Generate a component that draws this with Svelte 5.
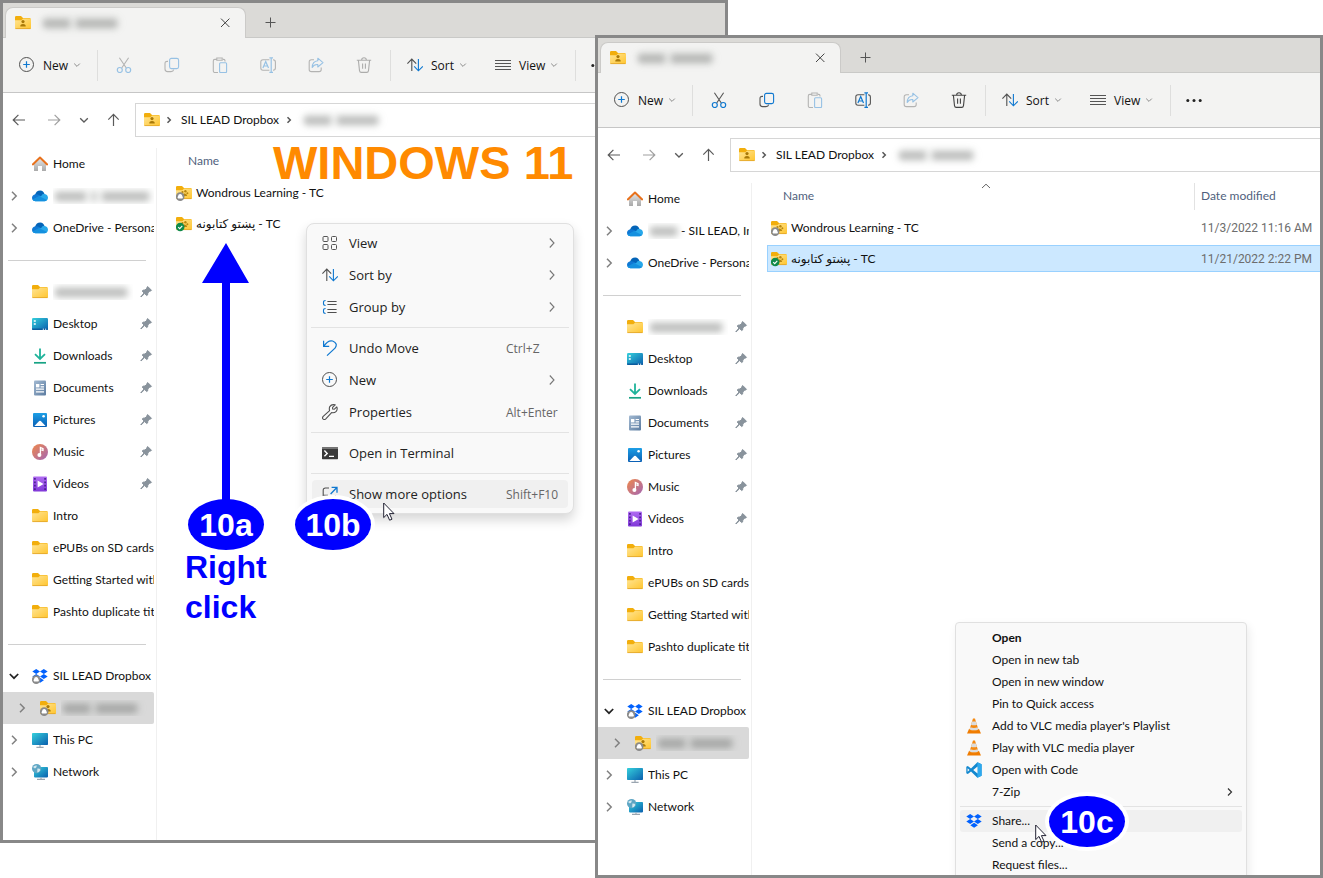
<script>
  const pinned = [
    { icon: 'folder', label: '', hidden: [72], pin: true },
    { icon: 'desktop', label: 'Desktop', pin: true },
    { icon: 'downloads', label: 'Downloads', pin: true },
    { icon: 'documents', label: 'Documents', pin: true },
    { icon: 'pictures', label: 'Pictures', pin: true },
    { icon: 'music', label: 'Music', pin: true },
    { icon: 'videos', label: 'Videos', pin: true },
    { icon: 'folder', label: 'Intro' },
    { icon: 'folder', label: 'ePUBs on SD cards' },
    { icon: 'folder', label: 'Getting Started with' },
    { icon: 'folder', label: 'Pashto duplicate title' },
  ];

  const drives = [
    { icon: 'dropboxsync', label: 'SIL LEAD Dropbox', twist: 'down' },
    { icon: 'usersync', label: '', hidden: [27, 41], twist: 'right', nested: true },
    { icon: 'pc', label: 'This PC', twist: 'right' },
    { icon: 'network', label: 'Network', twist: 'right' },
  ];

  const accounts = (hidden, label) => [
    { icon: 'home', label: 'Home' },
    { icon: 'cloud', label, hidden, twist: 'right' },
    { icon: 'cloud', label: 'OneDrive - Personal', twist: 'right' },
  ];

  const explorers = [
    {
      id: 'back',
      groups: [accounts([31, 4, 47], ''), pinned, drives],
      tools: { cut: false, copy: false, paste: false, rename: false, share: false, trash: false },
      files: [
        { name: 'Wondrous Learning - TC', icon: 'sharedsync' },
        { name: 'پښتو کتابونه - TC', icon: 'sharedok' },
      ],
      dates: false,
    },
    {
      id: 'front',
      groups: [accounts([27], '- SIL LEAD, Inc'), pinned, drives],
      tools: { cut: true, copy: true, paste: false, rename: true, share: false, trash: true },
      files: [
        { name: 'Wondrous Learning - TC', icon: 'sharedsync', date: '11/3/2022 11:16 AM' },
        { name: 'پښتو کتابونه - TC', icon: 'sharedok', date: '11/21/2022 2:22 PM', selected: true },
      ],
      dates: true,
    },
  ];

  const modernMenu = [
    [
      { icon: 'grid', label: 'View', sub: true },
      { icon: 'sort', label: 'Sort by', sub: true },
      { icon: 'group', label: 'Group by', sub: true },
    ],
    [
      { icon: 'undo', label: 'Undo Move', key: 'Ctrl+Z' },
      { icon: 'new', label: 'New', sub: true },
      { icon: 'wrench', label: 'Properties', key: 'Alt+Enter' },
    ],
    [{ icon: 'terminal', label: 'Open in Terminal' }],
    [{ icon: 'more', label: 'Show more options', key: 'Shift+F10', active: true }],
  ];

  const classicMenu = [
    [
      { label: 'Open', bold: true },
      { label: 'Open in new tab' },
      { label: 'Open in new window' },
      { label: 'Pin to Quick access' },
      { icon: 'vlc', label: "Add to VLC media player's Playlist" },
      { icon: 'vlc', label: 'Play with VLC media player' },
      { icon: 'code', label: 'Open with Code' },
      { label: '7-Zip', sub: true },
    ],
    [
      { icon: 'dropbox', label: 'Share...', active: true },
      { label: 'Send a copy...' },
      { label: 'Request files...' },
    ],
  ];
</script>

{#snippet folderShape()}
  <path d="M0 2.2Q0 1 1.2 1H6L8 3H14.6Q15.6 3 15.6 4V6H0Z" fill="#f2ae0c" />
  <path d="M0 5.2H6.4L8.2 3.4H15Q16 3.4 16 4.4V13Q16 14 14.8 14H1.2Q0 14 0 13Z" fill="url(#g-folder)" />
  <path d="M.4 13.6H15.6" stroke="#dfa32a" stroke-width=".8" />
{/snippet}

{#snippet dropboxShape()}
  <path d="M4.2 1 8 3.5 4.2 6 .3 3.5ZM11.8 1 15.7 3.5 11.8 6 8 3.5ZM.3 8.6 4.2 6.1 8 8.6 4.2 11.1ZM11.8 6.1 15.7 8.6 11.8 11.1 8 8.6ZM4.3 12.2 8.1 9.7 11.9 12.2 8.1 14.7Z" fill="#0061fe" />
{/snippet}

{#snippet syncBadge()}
  <circle cx="4.2" cy="11.6" r="4.3" fill="#8a8a8a" />
  <path d="M2.2 13.6Q.9 12.5 2 11.3 2.3 9 4.4 9.1 6.2 9.3 6.4 11.2 7.5 12.4 6.4 13.6Z" fill="#fff" />
{/snippet}

{#snippet person()}
  <circle cx="8" cy="6.6" r="1.6" fill="#a97908" />
  <path d="M5.3 11.6Q5 9 8 9T10.7 11.6Z" fill="#a97908" />
{/snippet}

{#snippet icon(name)}
  <svg class="icon" viewBox="0 0 16 16" width="16" height="16" fill="none" aria-hidden="true">
    {#if name === 'folder'}
      {@render folderShape()}
    {:else if name === 'user'}
      {@render folderShape()}
      {@render person()}
    {:else if name === 'usersync'}
      {@render folderShape()}
      {@render person()}
      {@render syncBadge()}
    {:else if name === 'sharedsync' || name === 'sharedok'}
      {@render folderShape()}
      <g fill="#b8860f">
        <circle cx="6.5" cy="7" r="1.1" /><circle cx="9.4" cy="6.2" r="1.2" /><circle cx="11.4" cy="8.2" r="1" />
        <path d="M5.6 11Q6.6 8.2 8.8 8.5T11.2 11Z" />
      </g>
      {#if name === 'sharedsync'}
        {@render syncBadge()}
      {:else}
        <circle cx="4.2" cy="11" r="4.3" fill="#0f8a4b" />
        <path d="M2.2 11.1 3.7 12.6 6.3 9.8" stroke="#fff" stroke-width="1.1" />
      {/if}
    {:else if name === 'dropbox'}
      {@render dropboxShape()}
    {:else if name === 'dropboxsync'}
      {@render dropboxShape()}
      {@render syncBadge()}
    {:else if name === 'home'}
      <path d="M2 7.5 8 2.2 14 7.5V14.4Q14 15 13.4 15H10V10H6V15H2.6Q2 15 2 14.4Z" fill="url(#g-home)" />
      <path d="M.8 8.4 8 1.6 15.2 8.4" stroke="#e8711c" stroke-width="2" stroke-linecap="round" stroke-linejoin="round" />
    {:else if name === 'cloud'}
      <path d="M3 7Q4.3 2.6 8.2 2.6 11.5 2.6 12.6 6.4L6 10.5 1 10Z" fill="#0364b8" />
      <path d="M3.4 6.3Q.2 6.8 0 9.8 .1 12.4 3 13.1L11 9.4 7.2 7Q5.3 5.9 3.4 6.3Z" fill="#0f78d4" />
      <path d="M9 8.2Q10.6 5.4 12.7 5.9 15.9 6.5 16 9.8 15.7 13 12.6 13.2H3.4Q1.4 13.1.5 11.8L8 8.2Z" fill="#28a8ea" />
      <path d="M7 8 15 12Q14 13.2 12.6 13.2H3.4Q1.4 13.1.5 11.8Z" fill="#1490df" />
    {:else if name === 'desktop'}
      <rect y="2" width="16" height="12" rx="1.2" fill="url(#g-desk)" />
      <path d="M1.8 4.2h2v1.6h-2zM1.8 7.2h2v1.6h-2z" fill="#fff" />
      <path d="M0 12.6H16V13Q16 14 15 14H1Q0 14 0 13Z" fill="#0b5c9e" />
      <path d="M10.8 13.2h1.2M13 13.2h1.2" stroke="#fff" />
    {:else if name === 'downloads'}
      <path d="M8 .4V10.8M3 6.2 8 11 13 6.2" stroke="#1fb39a" stroke-width="1.8" />
      <path d="M2 14.8H14" stroke="#17a384" stroke-width="1.7" />
    {:else if name === 'documents'}
      <rect x="2" y=".4" width="12" height="15.2" rx="1" fill="url(#g-doc)" />
      <path d="M4 4h3.4v3.4H4z" fill="#fff" />
      <path d="M8.6 4.5H12M8.6 6.8H12M4 9.2H12M4 11.8H12" stroke="#fff" stroke-width="1.2" />
    {:else if name === 'pictures'}
      <rect x="1" y="1" width="14" height="14" rx="1" fill="url(#g-pic)" />
      <path d="M2.4 14 7.2 9Q8 8.3 8.8 9L13.6 14Z" fill="#fff" />
      <circle cx="11.6" cy="4.2" r="1.3" fill="#fff" />
    {:else if name === 'music'}
      <circle cx="8" cy="8" r="8" fill="url(#g-music)" />
      <path d="M8.4 11V3.4L11 4.6V6.4L9.3 5.8" stroke="#fff" stroke-width="1.3" />
      <circle cx="7.4" cy="11" r="2" fill="#fff" />
    {:else if name === 'videos'}
      <rect x="1" y=".5" width="14" height="15" rx="1" fill="url(#g-video)" />
      <path d="M2.9 2V14M13.1 2V14" stroke="#4b2090" stroke-width="1.7" stroke-dasharray="1.8 1.6" />
      <path d="M5.6 4.4 11.6 8 5.6 11.6Z" fill="#fff" />
    {:else if name === 'pc'}
      <rect y="1" width="16" height="12" rx=".8" fill="url(#g-desk)" />
      <path d="M8 13V15M4.4 15.3H11.6" stroke="#9aa5b0" stroke-width="1.2" />
    {:else if name === 'network'}
      <rect x="2" y="3" width="14" height="10.4" rx=".8" fill="url(#g-desk)" />
      <path d="M9 13.4V15.3M5 15.4H13" stroke="#9aa5b0" stroke-width="1.1" />
      <circle cx="4.6" cy="4.6" r="4.6" fill="#5fa6c4" />
      <path d="M1 3Q3 1 4.8 1.6 5 3.6 3 4.6ZM5.4 4.6Q8 4.4 8.4 6 7 8.6 5.2 8.6Z" fill="#d3e8ef" />
    {:else if name === 'pin'}
      <path d="M9.8 2.6 13.4 6.2 12.8 7 11.6 7.2 9.8 9 9.6 11 8.8 11.6 6.6 9.6 3 13 2.8 12.8 6 9 4.2 7 5 6.2 7 6 8.8 4.2 9 3.2Z" fill="#89939c" stroke="#89939c" stroke-linejoin="round" />
    {:else if name === 'right'}
      <path d="M6 3.8 10.2 8 6 12.2" stroke="#808080" stroke-width="1.5" />
    {:else if name === 'down'}
      <path d="M3.8 6 8 10.2 12.2 6" stroke="#222" stroke-width="1.7" />
    {:else if name === 'crumb'}
      <path d="M6.5 5.2 9.3 8 6.5 10.8" stroke="#555" stroke-width="1.5" />
    {:else if name === 'sub'}
      <path d="M5.8 3.5 10 8 5.8 12.5" stroke="#777" stroke-width="1.1" />
    {:else if name === 'subsmall'}
      <path d="M6 4.5 9.5 8 6 11.5" stroke="#333" stroke-width="1.2" />
    {:else if name === 'back'}
      <path d="M2.4 8H14M7.4 2.8 2.2 8 7.4 13.2" stroke="#5a5a5a" stroke-width="1.2" />
    {:else if name === 'forward'}
      <path d="M2 8H13.6M8.6 2.8 13.8 8 8.6 13.2" stroke="#a0a0a0" stroke-width="1.2" />
    {:else if name === 'recent'}
      <path d="M4.2 6.2 8 10 11.8 6.2" stroke="#5a5a5a" stroke-width="1.3" />
    {:else if name === 'up'}
      <path d="M8.5 14V2.6M3.3 7.6 8.5 2.4 13.7 7.6" stroke="#5a5a5a" stroke-width="1.2" />
    {:else if name === 'close'}
      <path d="M4 3.6 12.4 12M12.4 3.6 4 12" stroke="#444" stroke-width="1" />
    {:else if name === 'plus'}
      <path d="M8.5 3.5V13.5M3.5 8.5H13.5" stroke="#555" />
    {:else if name === 'new'}
      <circle cx="7.5" cy="7.5" r="7" stroke="#505050" />
      <path d="M7.5 4.2V10.8M4.2 7.5H10.8" stroke="#0f78d0" stroke-width="1.2" />
    {:else if name === 'cut'}
      <path d="M3.4.8 10.3 11M12.6.8 5.7 11" stroke="#555" stroke-width="1.1" />
      <circle cx="3.8" cy="13" r="2.5" stroke="#0f78d0" stroke-width="1.2" />
      <circle cx="12.2" cy="13" r="2.5" stroke="#0f78d0" stroke-width="1.2" />
    {:else if name === 'copy'}
      <path d="M4 4.4H3.2Q1 4.4 1 6.4V12Q1 14.6 3.6 14.6H7Q9.3 14.6 9.6 12.6" stroke="#555" stroke-width="1.1" />
      <rect x="5.6" y="1.4" width="9" height="10.2" rx="1.8" stroke="#0f78d0" stroke-width="1.1" />
    {:else if name === 'paste'}
      <path d="M4.6 2.4H2.8Q1.3 2.4 1.3 3.9V14Q1.3 15.5 2.8 15.5H6M11 2.4H11.7Q13 2.4 13 3.8V4.6M4.8 1H10.2V3.2H4.8Z" stroke="#555" stroke-width="1.1" />
      <rect x="7.6" y="5.8" width="7" height="9.8" rx="1" stroke="#0f78d0" stroke-width="1.1" />
    {:else if name === 'rename'}
      <path d="M9.4 2.8H3Q.8 2.8.8 5V11Q.8 13.2 3 13.2H9.4M13 2.8Q15.4 2.8 15.4 5V11Q15.4 13.2 13 13.2" stroke="#555" stroke-width="1.1" />
      <path d="M2.9 11 5.7 4.6 8.5 11M4 9H7.4M11.2 1V15.2M9.4.8H13M9.4 15.4H13" stroke="#0f78d0" stroke-width="1.2" />
    {:else if name === 'share'}
      <path d="M6 2.8H3.4Q1.2 2.8 1.2 5V12.4Q1.2 14.6 3.4 14.6H11Q13.2 14.6 13.2 12.4V10.6" stroke="#555" stroke-width="1.1" />
      <path d="M9.8 1.2 15 5.6 9.8 10V7.5Q6 7.2 4.2 10.4 4.4 4.4 9.8 3.8Z" stroke="#0f78d0" stroke-width="1.1" stroke-linejoin="round" />
    {:else if name === 'trash'}
      <path d="M.8 3.2H15.2M5.6 3Q5.8.8 8 .8T10.4 3M2.4 3.4 3.5 13.6Q3.8 15.4 5.2 15.4H10.8Q12.2 15.4 12.5 13.6L13.6 3.4M6.6 6.6V11.8M9.4 6.6V11.8" stroke="#444" stroke-width="1.1" />
    {:else if name === 'sort'}
      <path d="M4.8 14V2.2M.4 6.6 4.8 2 9.2 6.6" stroke="#505050" stroke-width="1.1" />
      <path d="M11.4 2V13.8M7.2 9.4 11.4 13.8 15.8 9.4" stroke="#0f78d0" stroke-width="1.1" />
    {:else if name === 'lines'}
      <path d="M0 3.5H16M0 6.5H16M0 9.5H16M0 12.5H16" stroke="#555" />
    {:else if name === 'dots'}
      <g fill="#222"><circle cx="1.8" cy="8.5" r="1.5" /><circle cx="8" cy="8.5" r="1.5" /><circle cx="14.2" cy="8.5" r="1.5" /></g>
    {:else if name === 'grid'}
      <path d="M2 1.5H5Q6 1.5 6 2.5V5.5Q6 6.5 5 6.5H2Q1 6.5 1 5.5V2.5Q1 1.5 2 1.5ZM10.5 1.5H13.5Q14.5 1.5 14.5 2.5V5.5Q14.5 6.5 13.5 6.5H10.5Q9.5 6.5 9.5 5.5V2.5Q9.5 1.5 10.5 1.5ZM2 9.5H5Q6 9.5 6 10.5V13.5Q6 14.5 5 14.5H2Q1 14.5 1 13.5V10.5Q1 9.5 2 9.5ZM10.5 9.5H13.5Q14.5 9.5 14.5 10.5V13.5Q14.5 14.5 13.5 14.5H10.5Q9.5 14.5 9.5 13.5V10.5Q9.5 9.5 10.5 9.5Z" stroke="#555" />
    {:else if name === 'group'}
      <path d="M5.4 2.5H14.6M5.4 5.5H14.6M5.4 10.5H14.6M5.4 13.5H14.6" stroke="#505050" />
      <path d="M3.6 1.5Q1.5 1.5 1.5 3.2V4.8Q1.5 6.5 3.6 6.5M3.6 9.5Q1.5 9.5 1.5 11.2V12.8Q1.5 14.5 3.6 14.5" stroke="#0f78d0" stroke-width="1.1" />
    {:else if name === 'undo'}
      <path d="M1.6.8V6.4H7.2M1.8 6.2Q6-.2 10.6 1 16.4 3.4 13 8.2L5 15.6" stroke="#0f78d0" stroke-width="1.2" />
    {:else if name === 'wrench'}
      <path d="M13.2.9Q9.6-.2 7.8 2.6 6.9 4.4 7.6 6.6L1.2 12.4Q-.1 14 1.2 15.1 2.5 16.1 3.8 14.8L9.6 8.6Q12.4 9.2 14.2 7.3 15.8 5.2 14.8 2.9L12.4 5.2 10.6 5 10.6 3.4Z" stroke="#505050" stroke-width="1.1" stroke-linejoin="round" />
    {:else if name === 'terminal'}
      <rect y="2.2" width="16" height="12" rx=".6" fill="#3a3a3a" />
      <path d="M0 2.2H16V4H0Z" fill="#777" />
      <path d="M2.4 5.6 5.2 8.4 2.4 11.2M7 11.4H12" stroke="#fff" stroke-width="1.4" />
    {:else if name === 'more'}
      <path d="M7 2H3.4Q1.2 2 1.2 4.2V12.4Q1.2 14.6 3.4 14.6H11.2Q13.4 14.6 13.4 12.4V9M1.2 9.4H6" stroke="#505050" stroke-width="1.1" />
      <path d="M8.6 8 14.6 1.8M9.6 1.4H15V6.8" stroke="#0f78d0" stroke-width="1.3" />
    {:else if name === 'vlc'}
      <path d="M3 11H13L15 15.6H1Z" fill="#f07c00" />
      <path d="M7 .4H9L12.6 12Q8 14.4 3.4 12Z" fill="#f58a12" />
      <path d="M6 3.6H10L11 6.8Q8 7.8 5 6.8ZM4.3 9.2Q8 10.6 11.7 9.2L12.4 11.4Q8 13.2 3.6 11.4Z" fill="#dcdcdc" />
    {:else if name === 'code'}
      <path d="M11.4.3 15.6 2.2V13.8L11.4 15.7 5 9.4 1.8 12 .3 11.2V4.8L1.8 4 5 6.6Z" fill="#1388cf" />
      <path d="M11.4.3 15.6 2.2V13.8L11.4 15.7Z" fill="#2da9ee" />
      <path d="M11.5 4.6V11.4L7.2 8ZM1.6 6.2V9.8L3.5 8Z" fill="#f9f9f9" />
    {/if}
  </svg>
{/snippet}

{#snippet caret()}
  <svg class="caret" viewBox="0 0 8 8" width="8" height="8" fill="none" aria-hidden="true">
    <path d="M1.2 2.6 4 5.4 6.8 2.6" stroke="#8a8a8a" />
  </svg>
{/snippet}

{#snippet masked(parts)}
  <span class="masked" aria-hidden="true">
    {#each parts as w}<i style="width: {w}px"></i>{/each}
  </span>
{/snippet}

{#snippet cursor(place)}
  <svg class="cursor {place}" viewBox="0 0 12 19" width="12" height="19" aria-hidden="true">
    <path d="M.7 1V15.6L4 12.4 6.6 18.2 9 17.2 6.4 11.6H11Z" fill="#fff" stroke="#223" stroke-width="1" />
  </svg>
{/snippet}

{#snippet explorer(win)}
  <section class="window {win.id}" aria-label="File Explorer">
    <header class="titlebar">
      <div class="tab">
        {@render icon('user')}
        {@render masked([27, 41])}
        <button class="plain" aria-label="Close tab">{@render icon('close')}</button>
      </div>
      <button class="plain add" aria-label="New tab">{@render icon('plus')}</button>
    </header>

    <div class="toolbar">
      <button class="tool first">{@render icon('new')}<span>New</span>{@render caret()}</button>
      <span class="rule"></span>
      <div class="actions">
        {#each Object.entries(win.tools) as [name, on]}
          <button aria-label={name} disabled={!on}>{@render icon(name)}</button>
        {/each}
      </div>
      <span class="rule"></span>
      <button class="tool sort">{@render icon('sort')}<span>Sort</span>{@render caret()}</button>
      <button class="tool view">{@render icon('lines')}<span>View</span>{@render caret()}</button>
      <span class="rule"></span>
      <button class="plain dots" aria-label="See more">{@render icon('dots')}</button>
    </div>

    <div class="navbar">
      {#each ['back', 'forward', 'recent', 'up'] as name}
        <button class="plain" aria-label={name}>{@render icon(name)}</button>
      {/each}
      <nav class="address" aria-label="Address">
        {@render icon('user')}
        {@render icon('crumb')}
        <a href="#dropbox">SIL LEAD Dropbox</a>
        {@render icon('crumb')}
        {@render masked([27, 41])}
      </nav>
    </div>

    <div class="body">
      <aside>
        {#each win.groups as group, g}
          {#if g > 0}<hr />{/if}
          {#each group as item}
            <a class="row" class:nested={item.nested} href="#folder">
              <span class="twist">{#if item.twist}{@render icon(item.twist)}{/if}</span>
              {@render icon(item.icon)}
              <span class="label">
                {#if item.hidden}{@render masked(item.hidden)}{/if}{item.label}
              </span>
              {#if item.pin}{@render icon('pin')}{/if}
            </a>
          {/each}
        {/each}
      </aside>

      <main>
        <table>
          <thead>
            <tr>
              <th class="name">
                Name
                {#if win.dates}
                  <svg class="sorted" viewBox="0 0 10 6" width="10" height="6" fill="none" aria-hidden="true">
                    <path d="M1 5 5 1.2 9 5" stroke="#666" />
                  </svg>
                {/if}
              </th>
              {#if win.dates}<th class="date">Date modified</th>{/if}
            </tr>
          </thead>
          <tbody>
            {#each win.files as file}
              <tr class:selected={file.selected}>
                <td class="name"><div>{@render icon(file.icon)}<span>{file.name}</span></div></td>
                {#if win.dates}<td class="date">{file.date}</td>{/if}
              </tr>
            {/each}
          </tbody>
        </table>
      </main>
    </div>

    {#if win.id === 'front'}
      <div class="menu classic" role="menu">
        {#each classicMenu as group, g}
          {#if g > 0}<hr />{/if}
          {#each group as item}
            <button role="menuitem" class:active={item.active} class:bold={item.bold}>
              <span class="slot">{#if item.icon}{@render icon(item.icon)}{/if}</span>
              <span class="text">{item.label}</span>
              {#if item.sub}{@render icon('subsmall')}{/if}
            </button>
          {/each}
        {/each}
      </div>
    {/if}
  </section>
{/snippet}

<svg class="defs" width="0" height="0" aria-hidden="true">
  <defs>
    <linearGradient id="g-folder" x2="1" y2="1"><stop stop-color="#ffe596" /><stop offset="1" stop-color="#ffc52e" /></linearGradient>
    <linearGradient id="g-home" x2="0" y2="1"><stop stop-color="#e4e4e4" /><stop offset="1" stop-color="#a9a9a9" /></linearGradient>
    <linearGradient id="g-desk" x2="1" y2="1"><stop stop-color="#35d0dc" /><stop offset="1" stop-color="#0a5fae" /></linearGradient>
    <linearGradient id="g-doc" x2="1" y2="1"><stop stop-color="#a3bad2" /><stop offset="1" stop-color="#5b7ba0" /></linearGradient>
    <linearGradient id="g-pic" x2="0" y2="1"><stop stop-color="#1d9fe6" /><stop offset="1" stop-color="#0a5fb4" /></linearGradient>
    <linearGradient id="g-music" x2="1" y2="1"><stop stop-color="#f0884a" /><stop offset="1" stop-color="#a367b5" /></linearGradient>
    <linearGradient id="g-video" x2="0" y2="1"><stop stop-color="#b06cf2" /><stop offset="1" stop-color="#8038d8" /></linearGradient>
  </defs>
</svg>

<div class="stage">
  {#each explorers as win (win.id)}
    {@render explorer(win)}
  {/each}

  <div class="menu modern" role="menu">
    {#each modernMenu as group, g}
      {#if g > 0}<hr />{/if}
      {#each group as item}
        <button role="menuitem" class:active={item.active}>
          {@render icon(item.icon)}
          <span class="text">{item.label}</span>
          {#if item.key}<kbd>{item.key}</kbd>{/if}
          {#if item.sub}{@render icon('sub')}{/if}
        </button>
      {/each}
    {/each}
  </div>

  <h1>WINDOWS 11</h1>
  <svg class="arrow" viewBox="0 0 48 262" width="48" height="262" aria-hidden="true">
    <path d="M24 0 47 40H28V262H20V40H0Z" fill="#00f" />
  </svg>
  <span class="step a">10a</span>
  <span class="step b">10b</span>
  <span class="step c">10c</span>
  <p class="note">Right click</p>
  {@render cursor('on-modern')}
  {@render cursor('on-classic')}
</div>

<style>
  :global(body) {
    margin: 0;
    background: #fff;
  }
  .stage {
    position: relative;
    min-height: 100vh;
    overflow: hidden;
    font-family: Lato, 'DejaVu Sans', sans-serif;
    font-size: 12px;
    line-height: 16px;
    color: #111;
  }
  .stage * {
    box-sizing: border-box;
  }
  .toolbar,
  .modern {
    font-family: 'Open Sans', 'Noto Sans', sans-serif;
  }
  .defs {
    position: absolute;
  }
  button {
    display: flex;
    align-items: center;
    margin: 0;
    padding: 0;
    border: 0;
    background: none;
    color: inherit;
    font: inherit;
    text-align: left;
  }
  a {
    color: inherit;
    text-decoration: none;
  }
  svg {
    flex: none;
    display: block;
  }
  .plain {
    justify-content: center;
  }

  .window {
    position: absolute;
    display: flex;
    flex-direction: column;
    border: 3px solid #888;
    background: #fff;
    overflow: hidden;
  }
  .back {
    inset: 0 595px 35px 0;
  }
  .front {
    inset: 35px 0 0 595px;
  }

  .titlebar {
    display: flex;
    height: 35px;
    padding: 4px 0 0 2px;
    background: #dbdad7;
    border-bottom: 1px solid #c9c9c7;
  }
  .tab {
    display: flex;
    align-items: center;
    width: 241px;
    height: 31px;
    padding: 0 12px 0 9px;
    gap: 10px;
    border: 1px solid #cbcac8;
    border-bottom: 0;
    border-radius: 8px 8px 0 0;
    background: #f3f3f2;
  }
  .tab .plain {
    margin-left: auto;
  }
  .add {
    width: 48px;
  }

  .toolbar {
    display: flex;
    align-items: center;
    height: 55px;
    background: #f3f3f2;
    border-bottom: 1px solid #c6c6c6;
    white-space: nowrap;
  }
  .tool {
    flex: none;
    gap: 8px;
  }
  .tool span,
  kbd {
    padding-top: 2px;
  }
  .tool .caret {
    margin-left: -3px;
  }
  .first {
    width: 94px;
    padding-left: 16px;
  }
  .sort {
    width: 104px;
    padding-left: 16px;
  }
  .view {
    width: 80px;
  }
  .rule {
    flex: none;
    width: 1px;
    height: 31px;
    background: #dededd;
  }
  .actions {
    display: flex;
    margin: 0 2px;
  }
  .actions button {
    width: 48px;
    justify-content: center;
  }
  .actions button:disabled {
    opacity: 0.4;
  }
  .dots {
    width: 46px;
  }

  .navbar {
    display: grid;
    grid-template-columns: 32px 38px 22px 36px 1fr;
    height: 55px;
    padding-top: 10px;
    flex: none;
  }
  .navbar .plain {
    height: 34px;
  }
  .address {
    display: flex;
    align-items: center;
    height: 34px;
    margin-left: 4px;
    padding-left: 8px;
    border: 1px solid #d6d6d6;
    border-right: 0;
    white-space: nowrap;
  }
  .address .icon + .icon {
    margin-left: 1px;
  }
  .address a {
    margin: 0 2px 0 4px;
  }
  .address .masked {
    margin-left: 5px;
  }

  .masked {
    display: inline-flex;
    align-items: center;
    gap: 6px;
    height: 16px;
    padding: 0 4px 0 2px;
    border-radius: 8px;
    background: rgba(120, 130, 120, 0.08);
    filter: blur(3px);
    vertical-align: top;
  }
  .masked i {
    height: 9px;
    border-radius: 3px;
    background: rgba(90, 90, 90, 0.34);
  }

  .body {
    display: flex;
    flex: 1;
    min-height: 0;
  }
  aside {
    flex: none;
    width: 154px;
    padding-right: 2px;
    border-right: 1px solid #f0f0f0;
  }
  .row {
    display: flex;
    align-items: center;
    height: 32px;
    gap: 5px;
  }
  .twist {
    display: flex;
    flex: none;
    width: 24px;
    height: 16px;
    padding-left: 3px;
  }
  .row.nested {
    padding-left: 8px;
    border-radius: 0 2px 2px 0;
    background: #d9d9d9;
  }
  .label {
    flex: 1;
    min-width: 0;
    overflow: hidden;
    white-space: nowrap;
  }
  aside hr {
    height: 1px;
    margin: 16px 8px 15px 5px;
    border: 0;
    background: #d0d0d0;
  }

  main {
    flex: 1;
    min-width: 0;
    padding-left: 15px;
    margin-top: -4px;
  }
  table {
    width: 100%;
    border-spacing: 0 4px;
    table-layout: fixed;
  }
  th,
  td {
    height: 27px;
    padding: 0;
    white-space: nowrap;
    font-weight: 400;
    text-align: left;
  }
  th {
    position: relative;
    padding-bottom: 2px;
    color: #4f5f7d;
  }
  th.name {
    padding-left: 16px;
  }
  td.name div {
    display: flex;
    align-items: center;
    gap: 4px;
    padding-left: 4px;
  }
  .date {
    width: 126px;
    padding-left: 7px;
  }
  th.date {
    border-left: 1px solid #e2e2e2;
    padding-left: 6px;
  }
  td.date {
    font-family: Roboto, sans-serif;
    color: #6d6d6d;
  }
  .selected td {
    background: #cce8ff;
    border: 1px solid #99d1ff;
    border-width: 1px 0;
  }
  .selected td.name {
    border-left-width: 1px;
  }
  .selected td.name div {
    padding-left: 3px;
  }
  .sorted {
    position: absolute;
    left: 50%;
    top: 0;
  }

  .menu {
    position: absolute;
    display: flex;
    flex-direction: column;
    border: 1px solid #e0e0e0;
    background: #f9f9f9;
  }
  .menu hr {
    width: 100%;
    height: 1px;
    border: 0;
    background: #e3e3e3;
  }
  .menu .text {
    flex: 1;
    white-space: nowrap;
  }
  .modern {
    left: 306px;
    top: 223px;
    width: 268px;
    padding: 3px 4px;
    border-radius: 8px;
    box-shadow: 0 6px 12px rgba(0, 0, 0, 0.16);
  }
  .modern hr {
    margin: 4px 0;
  }
  .modern button {
    height: 32px;
    padding: 0 9px 0 11px;
    gap: 11px;
    color: #222;
  }
  .modern .text {
    font-size: 13px;
  }
  .modern kbd {
    width: 54px;
    font: inherit;
    color: #666;
    white-space: nowrap;
  }
  .modern .active {
    height: 28px;
    margin: 2px 1px;
    padding: 0 8px 0 10px;
    border-radius: 4px;
    background: #f0f0f0;
  }
  .classic {
    left: 357px;
    top: 584px;
    width: 292px;
    padding: 4px 4px 12px;
    border-radius: 4px;
    box-shadow: 2px 4px 10px rgba(0, 0, 0, 0.08);
  }
  .classic hr {
    margin: 3px 0;
  }
  .classic button {
    height: 22px;
    padding: 0 4px 0 6px;
    border-radius: 3px;
  }
  .classic .slot {
    width: 26px;
  }
  .classic .active {
    background: #f0f0f0;
  }
  .classic .bold {
    font-weight: 700;
  }

  h1,
  .note,
  .step {
    position: absolute;
    margin: 0;
    font-family: 'Liberation Sans', Arial, sans-serif;
    font-weight: 700;
  }
  h1 {
    left: 273px;
    top: 142px;
    font-size: 47px;
    line-height: 42px;
    color: #ff8a00;
    white-space: nowrap;
  }
  .note {
    left: 185px;
    top: 547px;
    width: 100px;
    font-size: 32px;
    line-height: 40px;
    color: #00f;
  }
  .step {
    display: grid;
    place-items: center;
    width: 76px;
    height: 51px;
    border-radius: 50%;
    background: #00f;
    box-shadow: 0 0 0 4px #fff;
    font-size: 32px;
    line-height: 36px;
    color: #fff;
  }
  .a {
    left: 188px;
    top: 499px;
    box-shadow: none;
  }
  .b {
    left: 295px;
    top: 499px;
  }
  .c {
    left: 1049px;
    top: 796px;
  }
  .arrow {
    position: absolute;
    left: 202px;
    top: 243px;
  }
  .cursor {
    position: absolute;
  }
  .on-modern {
    left: 383px;
    top: 502px;
  }
  .on-classic {
    left: 1035px;
    top: 824px;
  }
</style>
